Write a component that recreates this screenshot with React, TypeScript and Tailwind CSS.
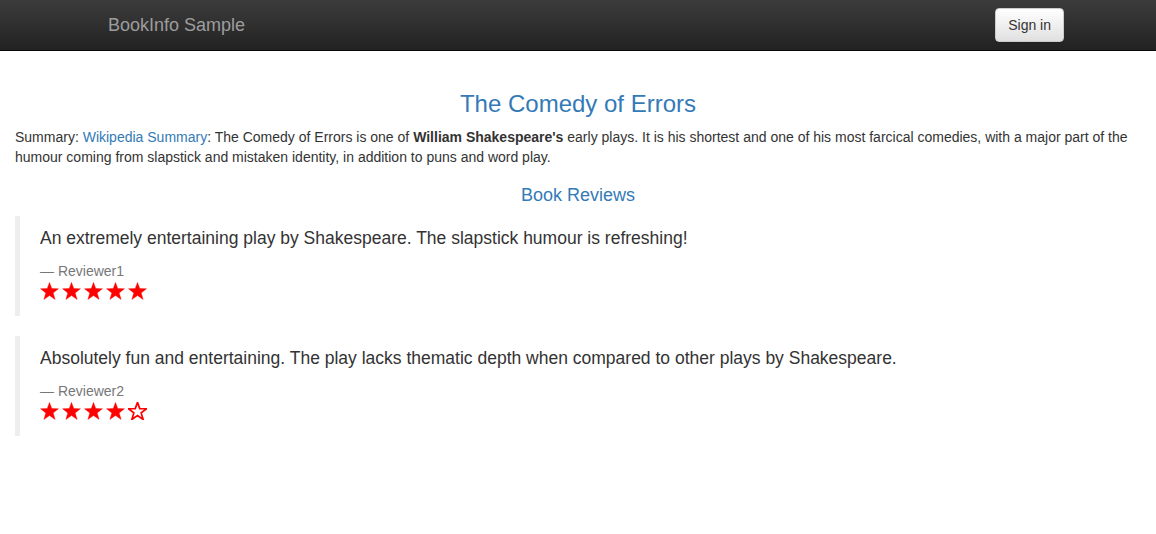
import React from "react";

const Star: React.FC<{ filled: boolean }> = ({ filled }) => (
  <svg width="19" height="18" viewBox="0 0 24 23" className="shrink-0">
    <polygon
      points="12,0.5 14.9,8.4 23.5,8.6 16.7,13.9 19.2,22.3 12,17.4 4.8,22.3 7.3,13.9 0.5,8.6 9.1,8.4"
      fill={filled ? "#ff0000" : "none"}
      stroke="#ff0000"
      strokeWidth={filled ? 0.5 : 2.2}
      strokeLinejoin="miter"
    />
  </svg>
);

const App: React.FC = () => {
  const reviews = [
    {
      text: "An extremely entertaining play by Shakespeare. The slapstick humour is refreshing!",
      reviewer: "Reviewer1",
      stars: 5,
    },
    {
      text: "Absolutely fun and entertaining. The play lacks thematic depth when compared to other plays by Shakespeare.",
      reviewer: "Reviewer2",
      stars: 4,
    },
  ];

  return (
    <div className="min-h-[534px] bg-white font-['Liberation_Sans',Arial,sans-serif] text-[14px] leading-[20px] text-[#333]">
      {/* navbar */}
      <nav className="h-[51px] border-b border-[#080808] bg-[linear-gradient(to_bottom,#3c3c3c_0,#222_100%)]">
        <div className="mx-auto flex h-[50px] w-[970px] items-start justify-between px-[15px]">
          <span className="px-0 py-[15px] text-[18px] leading-[20px] text-[#9d9d9d]">
            BookInfo Sample
          </span>
          <button className="mr-[-16px] mt-[8px] h-[34px] rounded-[4px] border border-[#ccc] bg-[linear-gradient(to_bottom,#fff_0,#e0e0e0_100%)] px-[12px] text-[14px] leading-[20px] text-[#333] shadow-[inset_0_1px_0_rgba(255,255,255,.15),0_1px_1px_rgba(0,0,0,.075)]">
            Sign in
          </button>
        </div>
      </nav>

      <div className="px-[15px] pt-[20px]">
        <h3 className="mt-[20px] mb-[10px] text-center text-[24px] leading-[26.4px] text-[#337ab7]">
          The Comedy of Errors
        </h3>
        <p className="mb-[10px]">
          Summary: <a className="text-[#337ab7]">Wikipedia Summary</a>: The Comedy of Errors is one of{" "}
          <b>William Shakespeare's</b> early plays. It is his shortest and one of his most farcical
          comedies, with a major part of the humour coming from slapstick and mistaken identity, in
          addition to puns and word play.
        </p>
        <h4 className="mt-[19px] mb-[10px] text-center text-[18px] leading-[19.8px] text-[#337ab7]">
          Book Reviews
        </h4>

        {reviews.map((r, i) => (
          <blockquote
            key={i}
            className="mb-[20px] border-l-[5px] border-[#eee] px-[20px] py-[10px] text-[17.5px] leading-[25px]"
          >
            <p className="mb-[10px]">{r.text}</p>
            <small className="block text-[14px] leading-[20px] text-[#777]">— {r.reviewer}</small>
            <div className="flex h-[25px] items-start gap-[3px] pt-[1px]">
              {[0, 1, 2, 3, 4].map((n) => (
                <Star key={n} filled={n < r.stars} />
              ))}
            </div>
          </blockquote>
        ))}
      </div>
    </div>
  );
};

export default App;
